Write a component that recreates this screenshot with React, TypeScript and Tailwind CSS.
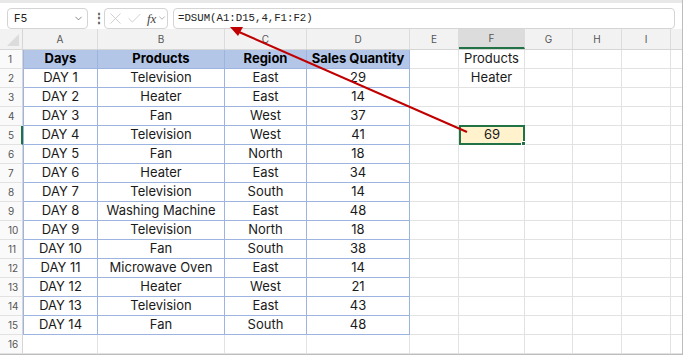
import { ChevronDown, X, Check } from 'lucide-react';

const COLS = [
  { key: 'A', w: 75 },
  { key: 'B', w: 127 },
  { key: 'C', w: 82 },
  { key: 'D', w: 103 },
  { key: 'E', w: 49 },
  { key: 'F', w: 66 },
  { key: 'G', w: 48 },
  { key: 'H', w: 49 },
  { key: 'I', w: 49 },
];

const DATA: [string, string, string, number][] = [
  ['DAY 1', 'Television', 'East', 29],
  ['DAY 2', 'Heater', 'East', 14],
  ['DAY 3', 'Fan', 'West', 37],
  ['DAY 4', 'Television', 'West', 41],
  ['DAY 5', 'Fan', 'North', 18],
  ['DAY 6', 'Heater', 'East', 34],
  ['DAY 7', 'Television', 'South', 14],
  ['DAY 8', 'Washing Machine', 'East', 48],
  ['DAY 9', 'Television', 'North', 18],
  ['DAY 10', 'Fan', 'South', 38],
  ['DAY 11', 'Microwave Oven', 'East', 14],
  ['DAY 12', 'Heater', 'West', 21],
  ['DAY 13', 'Television', 'East', 43],
  ['DAY 14', 'Fan', 'South', 48],
];

const HEADERS = ['Days', 'Products', 'Region', 'Sales Quantity'];

const cellValue = (row: number, col: number): string => {
  if (row === 1 && col < 4) return HEADERS[col];
  if (row >= 2 && row <= 15 && col < 4) return String(DATA[row - 2][col]);
  if (col === 5 && row === 1) return 'Products';
  if (col === 5 && row === 2) return 'Heater';
  if (col === 5 && row === 5) return '69';
  return '';
};

const Toolbar = () => (
  <div className="flex items-center h-[29px] pt-[4px] px-[7px] gap-[5px] bg-white border-t-[3px] border-[#e8e8e8]">
    <div className="flex items-center justify-between w-[81px] h-[21px] border border-[#d4d4d4] rounded-[4px] pl-[6px] pr-[3px] text-[11px] text-[#222]">
      <span>F5</span>
      <ChevronDown size={11} strokeWidth={1.5} className="text-[#555] shrink-0" />
    </div>
    <span className="text-[12px] text-[#555] leading-none font-bold w-[6px] text-center">⋮</span>
    <div className="flex items-center w-[64px] h-[21px] border border-[#d4d4d4] rounded-[4px] pl-[1px] text-[#c4c4c4]">
      <X size={19} strokeWidth={1} className="shrink-0" />
      <Check size={17} strokeWidth={1.1} className="shrink-0 ml-[1px]" />
      <span className="font-['Liberation_Serif'] italic text-[13px] text-[#444] leading-none ml-[4px]">fx</span>
      <ChevronDown size={10} strokeWidth={1.5} className="text-[#888] ml-[1px] shrink-0" />
    </div>
    <div className="flex items-center flex-1 h-[21px] border border-[#d4d4d4] rounded-[4px] pl-[4px] font-['Liberation_Mono'] text-[10.7px] text-[#222]">
      =DSUM(A1:D15,4,F1:F2)
    </div>
  </div>
);

const ColumnHeader = () => (
  <div className="flex h-[21px] bg-[#f2f2f2] border-b border-[#d6d6d6]">
    <div className="w-[23px] shrink-0 relative border-r border-[#d6d6d6]">
      <div className="absolute right-[3px] bottom-[3px] w-0 h-0 border-l-[12px] border-l-transparent border-b-[12px] border-b-[#dcdcdc]" />
    </div>
    {COLS.map(c => (
      <div
        key={c.key}
        style={{ width: c.w }}
        className={`shrink-0 flex items-center justify-center text-[10px] text-[#555] border-r border-[#dcdcdc] ${
          c.key === 'F' ? 'bg-[#dcdcdc] border-b-2 border-b-[#217346] text-[#1e5c38]' : ''
        }`}
      >
        {c.key}
      </div>
    ))}
    <div className="flex-1" />
  </div>
);

const Row = ({ row }: { row: number }) => {
  const inTable = row <= 15;
  return (
    <div className="flex h-[19px]">
      <div
        className={`w-[23px] shrink-0 flex items-center pl-[8px] text-[10px] text-[#555] bg-[#fafafa] border-b border-[#e2e2e2] ${
          row === 5 ? 'border-r-2 border-r-[#217346] text-[#1e5c38]' : 'border-r border-r-[#d6d6d6]'
        }`}
      >
        {row}
      </div>
      {COLS.map((c, ci) => {
        const table = inTable && ci < 4;
        const isHead = row === 1 && ci < 4;
        const active = row === 5 && ci === 5;
        const value = cellValue(row, ci);
        let cls = 'border-r border-b border-[#e2e2e2]';
        if (table) cls = 'border-r border-b border-[#9db3e0]';
        if (table && ci === 0) cls += ' border-l border-l-[#9db3e0]';
        if (isHead) cls += ' bg-[#b4c6e7] font-bold text-black';
        if (active) cls = 'relative bg-[#fff2cc] border-2 border-[#217346] -mt-[1px] h-[20px]';
        return (
          <div
            key={c.key}
            style={{ width: c.w }}
            className={`shrink-0 flex items-center justify-center text-[13px] text-[#1a1a1a] ${cls}`}
          >
            {value}
            {active && (
              <div className="absolute -right-[3px] -bottom-[3px] w-[5px] h-[5px] bg-[#217346] border border-white" />
            )}
          </div>
        );
      })}
      <div className="flex-1 border-b border-[#e2e2e2]" />
    </div>
  );
};

export default function App() {
  const rows = Array.from({ length: 16 }, (_, i) => i + 1);
  return (
    <div className="w-[687px] h-[360px] bg-white relative overflow-hidden font-['Inter',sans-serif]">
      <div className="w-[683px] h-[355px] border-r border-b border-[#bdbdbd] overflow-hidden">
        <Toolbar />
        <ColumnHeader />
        {rows.map(r => (
          <Row key={r} row={r} />
        ))}
      </div>
      <svg className="absolute inset-0 pointer-events-none" width={687} height={360}>
        <line x1={467} y1={132} x2={239} y2={32} stroke="#c00000" strokeWidth={2} />
        <polygon points="230,27 243,27 238,36" fill="#c00000" />
      </svg>
    </div>
  );
}
